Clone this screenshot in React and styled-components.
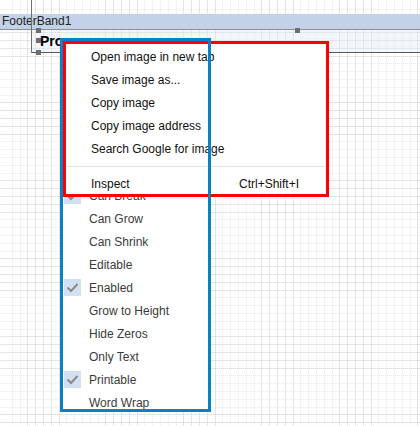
import React from 'react'
import styled, { createGlobalStyle } from 'styled-components'

const GlobalStyle = createGlobalStyle`
  html, body {
    margin: 0;
    padding: 0;
    background: #ffffff;
  }
  body {
    font-family: "Liberation Sans", Arial, sans-serif;
  }
`

const Canvas = styled.div`
  position: relative;
  width: 420px;
  height: 426px;
  overflow: hidden;
  background-color: #ffffff;
  background-image:
    repeating-linear-gradient(0deg, rgba(255, 255, 255, 0.55) 0 1px, transparent 1px 2px),
    repeating-linear-gradient(90deg, rgba(255, 255, 255, 0.55) 0 1px, transparent 1px 2px),
    repeating-linear-gradient(90deg, transparent 0 6.8px, rgba(175, 175, 175, 0.45) 6.8px 7.8px),
    repeating-linear-gradient(0deg, transparent 0 6.8px, rgba(175, 175, 175, 0.45) 6.8px 7.8px);
  background-position: 0 0, 0 0, 5px 4px, 5px 4px;
`

const Page = styled.div`
  position: relative;
  padding-top: 14px;

  &::before {
    content: '';
    position: absolute;
    left: 31px;
    top: 0;
    width: 1px;
    height: 53px;
    background: #707070;
  }
`

const Band = styled.div`
  height: 15px;
  line-height: 15px;
  padding-left: 2px;
  background: #c3d2e8;
  border-bottom: 1px solid #8b9099;
  font-size: 12px;
  color: #222;
`

const ObjectRow = styled.div`
  margin-left: 31px;
  height: 22px;
  display: flex;
  align-items: center;
  padding-left: 9px;
  background: rgba(225, 232, 246, 0.4);
  border-bottom: 1px solid #555;
  font-size: 14px;
  font-weight: bold;
  color: #000;
`

const Handle = styled.span`
  position: absolute;
  left: ${p => p.$x}px;
  top: ${p => p.$y}px;
  width: 5px;
  height: 5px;
  background: #6e6e6e;
`

const DesignerMenu = styled.div`
  position: absolute;
  left: 63px;
  top: 38px;
  width: 145px;
  height: 373px;
  overflow: hidden;
  background: #ffffff;
  display: flex;
  flex-direction: column;
`

const MenuHead = styled.div`
  height: 146px;
  flex: none;
`

const DesignerItem = styled.div`
  position: relative;
  flex: none;
  height: 23px;
  display: flex;
  align-items: center;
  padding-left: 26px;
  font-size: 12px;
  color: #3a3a3a;
`

const CheckBox = styled.span`
  position: absolute;
  left: 1px;
  top: 3px;
  width: 17px;
  height: 17px;
  background: #d3e0f2;
  display: flex;
  align-items: center;
  justify-content: center;
`

const BrowserMenu = styled.div`
  position: absolute;
  left: 63px;
  top: 41px;
  width: 266px;
  height: 156px;
  box-sizing: border-box;
  padding: 4px 0 2px;
  background: #ffffff;
  font-size: 12px;
  color: #111;
`

const BrowserItem = styled.div`
  height: 23px;
  display: flex;
  align-items: center;
  justify-content: space-between;
  padding: 0 30px 0 28px;
`

const Separator = styled.div`
  height: 12px;
  display: flex;
  align-items: center;

  &::after {
    content: '';
    flex: 1;
    height: 1px;
    background: #e4e4e4;
  }
`

const Outline = styled.div`
  position: absolute;
  left: ${p => p.$x}px;
  top: ${p => p.$y}px;
  width: ${p => p.$w}px;
  height: ${p => p.$h}px;
  box-sizing: border-box;
  border: 3px solid ${p => p.$color};
  pointer-events: none;
`

const Check = () => (
  <svg width="13" height="11" viewBox="0 0 13 11">
    <path d="M1.5 5.5 L5 9 L11.5 2" fill="none" stroke="#8a8a8a" strokeWidth="2" />
  </svg>
)

const designerItems = [
  { label: 'Can Break', checked: true },
  { label: 'Can Grow' },
  { label: 'Can Shrink' },
  { label: 'Editable' },
  { label: 'Enabled', checked: true },
  { label: 'Grow to Height' },
  { label: 'Hide Zeros' },
  { label: 'Only Text' },
  { label: 'Printable', checked: true },
  { label: 'Word Wrap' },
]

const browserItems = [
  'Open image in new tab',
  'Save image as...',
  'Copy image',
  'Copy image address',
  'Search Google for image',
]

export default function App() {
  return (
    <>
      <GlobalStyle />
      <Canvas>
        <Page>
          <Band>FooterBand1</Band>
          <ObjectRow>Pro</ObjectRow>
        </Page>
        <Handle $x={36} $y={28} />
        <Handle $x={36} $y={38} />
        <Handle $x={36} $y={50} />
        <Handle $x={295} $y={28} />

        <DesignerMenu>
          <MenuHead />
          {designerItems.map(item => (
            <DesignerItem key={item.label}>
              {item.checked && (
                <CheckBox>
                  <Check />
                </CheckBox>
              )}
              {item.label}
            </DesignerItem>
          ))}
        </DesignerMenu>

        <BrowserMenu>
          {browserItems.map(label => (
            <BrowserItem key={label}>{label}</BrowserItem>
          ))}
          <Separator />
          <BrowserItem>
            <span>Inspect</span>
            <span>Ctrl+Shift+I</span>
          </BrowserItem>
        </BrowserMenu>

        <Outline $x={63} $y={41} $w={266} $h={156} $color="#ff0000" />
        <Outline $x={60} $y={38} $w={151} $h={374} $color="#0a80c8" />
      </Canvas>
    </>
  )
}
